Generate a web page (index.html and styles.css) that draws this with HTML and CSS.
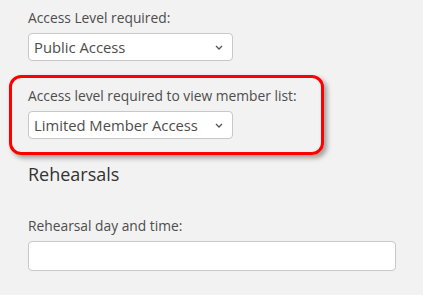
FILE: index.html
```html
<!DOCTYPE html>
<html>
<head>
    <title>Group Settings</title>
    <link rel="stylesheet" href="styles.css">
</head>
<body>
    <div class="page">
        <div class="field">
            <label for="access_level">Access Level required:</label>
            <div class="select-wrap">
                <select id="access_level" name="access_level">
                    <option selected>Public Access</option>
                    <option>Limited Member Access</option>
                </select>
                <svg class="chevron" width="8" height="5" viewBox="0 0 8 5"><path d="M1 1l3 3 3-3" fill="none" stroke="#555" stroke-width="1.3"/></svg>
            </div>
        </div>

        <div class="field highlight">
            <label for="member_list_level">Access level required to view member list:</label>
            <div class="select-wrap">
                <select id="member_list_level" name="member_list_level">
                    <option>Public Access</option>
                    <option selected>Limited Member Access</option>
                </select>
                <svg class="chevron" width="8" height="5" viewBox="0 0 8 5"><path d="M1 1l3 3 3-3" fill="none" stroke="#555" stroke-width="1.3"/></svg>
            </div>
        </div>

        <h3>Rehearsals</h3>

        <div class="field spaced">
            <label for="rehearsal_time">Rehearsal day and time:</label>
            <input type="text" id="rehearsal_time" name="rehearsal_time">
        </div>
    </div>
</body>
</html>
```

FILE: styles.css
```css
body {
    margin: 0;
    font-family: "Open Sans", Arial, sans-serif;
    background-color: #f2f2f2;
    color: #4d4d4d;
}
.page {
    padding: 8px 27px 0 28px;
}
label {
    display: block;
    font-size: 13.8px;
    line-height: 20px;
    margin-bottom: 5px;
}
.select-wrap {
    position: relative;
    width: 205px;
}
select {
    display: block;
    width: 205px;
    height: 28px;
    padding: 0 20px 0 5px;
    font-family: inherit;
    font-size: 14.8px;
    color: #4d4d4d;
    background-color: #fff;
    border: 1px solid #c8c8c8;
    border-radius: 4px;
    appearance: none;
}
.chevron {
    position: absolute;
    right: 10px;
    top: 12px;
}
.highlight {
    margin: 14px 0 0 -19px;
    width: 280px;
    padding: 8px 13px 13px 16px;
    border: 3px solid #f00;
    border-radius: 12px;
    box-shadow: 3px 3px 5px rgba(0, 0, 0, 0.35);
}
h3 {
    margin: 8px 0 0;
    font-size: 18px;
    font-weight: normal;
    line-height: 22px;
    color: #333;
}
.spaced {
    margin-top: 31px;
}
input[type="text"] {
    display: block;
    box-sizing: border-box;
    width: 368px;
    height: 30px;
    background-color: #fff;
    border: 1px solid #c8c8c8;
    border-radius: 4px;
}
```
